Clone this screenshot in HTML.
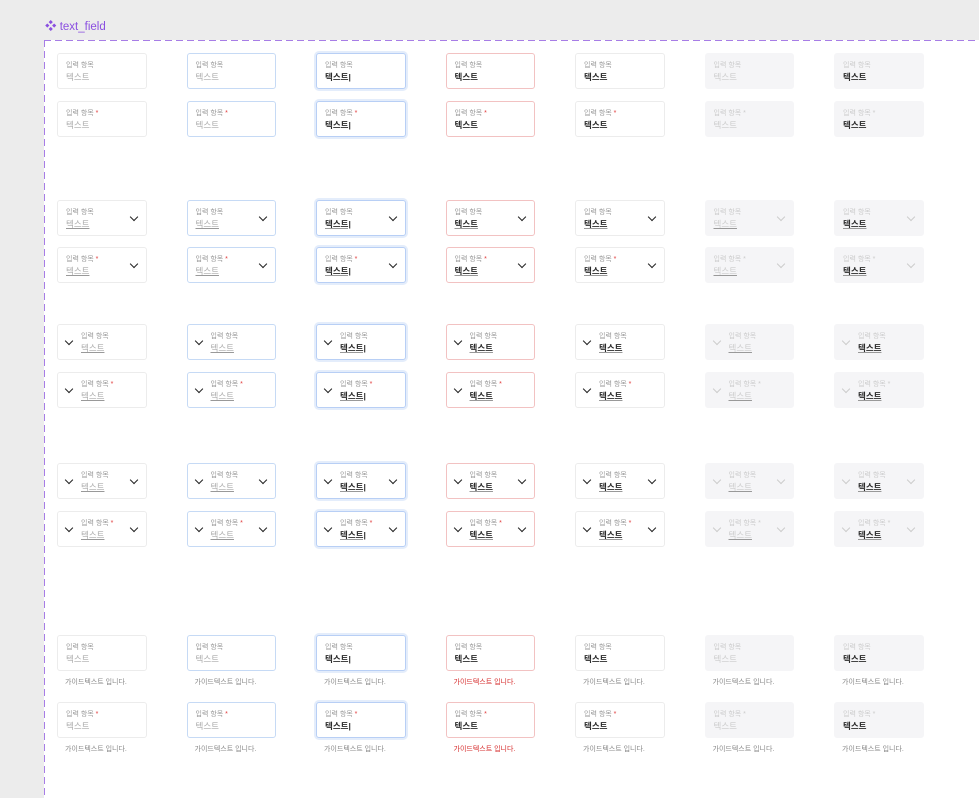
<!DOCTYPE html>
<html><head><meta charset="utf-8"><style>
*{box-sizing:border-box;margin:0;padding:0}
html,body{width:979px;height:798px;overflow:hidden}
body{background:#ececec;position:relative;font-family:"Liberation Sans","Noto Sans CJK KR",sans-serif}
.title{position:absolute;left:45px;top:18px;color:#8a4fe0;font-size:11.5px}
.frame{position:absolute;left:44px;top:40px;width:940px;height:770px;background:#fff}
.ft{position:absolute;left:44px;top:40px;width:940px;height:1px;background:repeating-linear-gradient(90deg,#a77de6 0 7px,transparent 7px 11px)}
.fl{position:absolute;left:44px;top:40px;width:1px;height:760px;background:repeating-linear-gradient(180deg,#a77de6 0 7px,transparent 7px 11px)}
.row{position:absolute;left:57px;display:flex;gap:40px}
.c{width:89.5px;position:relative}
.f{height:36px;border:1px solid #ececec;border-radius:3px;position:relative;background:#fff}
.l{position:absolute;left:8px;top:6px;font-size:7px;color:#999;white-space:nowrap}
.l b{color:#e03a3a;font-weight:normal}
.v{position:absolute;left:8px;top:17px;font-size:8.5px;color:#aaa;white-space:nowrap}
.u .v{text-decoration:underline;text-decoration-color:#999}
.lc .l,.lc .v{left:23px}
.cr{position:absolute;top:13px;width:6px;height:6px;border-right:1.3px solid #222;border-bottom:1.3px solid #222;transform:rotate(45deg)}
.cr.r{right:9px}.cr.L{left:8px}
.h{border-color:#c6daf5}
.fo{border:1.5px solid #b8cff5;box-shadow:0 0 0 2px #e4edfb}
.fo .v,.e .v,.fi .v{color:#2a2a2a;font-weight:bold}
.e{border-color:#f2c2c2}
.d,.df{background:#f5f5f7;border-color:#f5f5f7}
.d .l,.d .v,.df .l{color:#ccc}.d .l b,.df .l b{color:#ccc}
.df .v{color:#2a2a2a;font-weight:bold}
.d .cr,.df .cr{border-color:#ccc}
.g{font-size:7px;color:#888;margin:6px 0 0 8px;white-space:nowrap}
.g.er{color:#d62b2b}
</style></head><body>
<div class="title">❖ text_field</div>
<div class="frame"></div><div class="ft"></div><div class="fl"></div>

<!-- group 1 -->
<div class="row" style="top:53px">
<div class="c"><div class="f"><span class="l">입력 항목</span><span class="v">텍스트</span></div></div>
<div class="c"><div class="f h"><span class="l">입력 항목</span><span class="v">텍스트</span></div></div>
<div class="c"><div class="f fo"><span class="l">입력 항목</span><span class="v">텍스트|</span></div></div>
<div class="c"><div class="f e"><span class="l">입력 항목</span><span class="v">텍스트</span></div></div>
<div class="c"><div class="f fi"><span class="l">입력 항목</span><span class="v">텍스트</span></div></div>
<div class="c"><div class="f d"><span class="l">입력 항목</span><span class="v">텍스트</span></div></div>
<div class="c"><div class="f df"><span class="l">입력 항목</span><span class="v">텍스트</span></div></div>
</div>
<div class="row" style="top:101px">
<div class="c"><div class="f"><span class="l">입력 항목 <b>*</b></span><span class="v">텍스트</span></div></div>
<div class="c"><div class="f h"><span class="l">입력 항목 <b>*</b></span><span class="v">텍스트</span></div></div>
<div class="c"><div class="f fo"><span class="l">입력 항목 <b>*</b></span><span class="v">텍스트|</span></div></div>
<div class="c"><div class="f e"><span class="l">입력 항목 <b>*</b></span><span class="v">텍스트</span></div></div>
<div class="c"><div class="f fi"><span class="l">입력 항목 <b>*</b></span><span class="v">텍스트</span></div></div>
<div class="c"><div class="f d"><span class="l">입력 항목 <b>*</b></span><span class="v">텍스트</span></div></div>
<div class="c"><div class="f df"><span class="l">입력 항목 <b>*</b></span><span class="v">텍스트</span></div></div>
</div>

<!-- group 2: right chevron -->
<div class="row u" style="top:200px">
<div class="c"><div class="f"><span class="l">입력 항목</span><span class="v">텍스트</span><i class="cr r"></i></div></div>
<div class="c"><div class="f h"><span class="l">입력 항목</span><span class="v">텍스트</span><i class="cr r"></i></div></div>
<div class="c"><div class="f fo"><span class="l">입력 항목</span><span class="v">텍스트|</span><i class="cr r"></i></div></div>
<div class="c"><div class="f e"><span class="l">입력 항목</span><span class="v">텍스트</span><i class="cr r"></i></div></div>
<div class="c"><div class="f fi"><span class="l">입력 항목</span><span class="v">텍스트</span><i class="cr r"></i></div></div>
<div class="c"><div class="f d"><span class="l">입력 항목</span><span class="v">텍스트</span><i class="cr r"></i></div></div>
<div class="c"><div class="f df"><span class="l">입력 항목</span><span class="v">텍스트</span><i class="cr r"></i></div></div>
</div>
<div class="row u" style="top:247px">
<div class="c"><div class="f"><span class="l">입력 항목 <b>*</b></span><span class="v">텍스트</span><i class="cr r"></i></div></div>
<div class="c"><div class="f h"><span class="l">입력 항목 <b>*</b></span><span class="v">텍스트</span><i class="cr r"></i></div></div>
<div class="c"><div class="f fo"><span class="l">입력 항목 <b>*</b></span><span class="v">텍스트|</span><i class="cr r"></i></div></div>
<div class="c"><div class="f e"><span class="l">입력 항목 <b>*</b></span><span class="v">텍스트</span><i class="cr r"></i></div></div>
<div class="c"><div class="f fi"><span class="l">입력 항목 <b>*</b></span><span class="v">텍스트</span><i class="cr r"></i></div></div>
<div class="c"><div class="f d"><span class="l">입력 항목 <b>*</b></span><span class="v">텍스트</span><i class="cr r"></i></div></div>
<div class="c"><div class="f df"><span class="l">입력 항목 <b>*</b></span><span class="v">텍스트</span><i class="cr r"></i></div></div>
</div>

<!-- group 3: left chevron -->
<div class="row u lc" style="top:324px">
<div class="c"><div class="f"><i class="cr L"></i><span class="l">입력 항목</span><span class="v">텍스트</span></div></div>
<div class="c"><div class="f h"><i class="cr L"></i><span class="l">입력 항목</span><span class="v">텍스트</span></div></div>
<div class="c"><div class="f fo"><i class="cr L"></i><span class="l">입력 항목</span><span class="v">텍스트|</span></div></div>
<div class="c"><div class="f e"><i class="cr L"></i><span class="l">입력 항목</span><span class="v">텍스트</span></div></div>
<div class="c"><div class="f fi"><i class="cr L"></i><span class="l">입력 항목</span><span class="v">텍스트</span></div></div>
<div class="c"><div class="f d"><i class="cr L"></i><span class="l">입력 항목</span><span class="v">텍스트</span></div></div>
<div class="c"><div class="f df"><i class="cr L"></i><span class="l">입력 항목</span><span class="v">텍스트</span></div></div>
</div>
<div class="row u lc" style="top:372px">
<div class="c"><div class="f"><i class="cr L"></i><span class="l">입력 항목 <b>*</b></span><span class="v">텍스트</span></div></div>
<div class="c"><div class="f h"><i class="cr L"></i><span class="l">입력 항목 <b>*</b></span><span class="v">텍스트</span></div></div>
<div class="c"><div class="f fo"><i class="cr L"></i><span class="l">입력 항목 <b>*</b></span><span class="v">텍스트|</span></div></div>
<div class="c"><div class="f e"><i class="cr L"></i><span class="l">입력 항목 <b>*</b></span><span class="v">텍스트</span></div></div>
<div class="c"><div class="f fi"><i class="cr L"></i><span class="l">입력 항목 <b>*</b></span><span class="v">텍스트</span></div></div>
<div class="c"><div class="f d"><i class="cr L"></i><span class="l">입력 항목 <b>*</b></span><span class="v">텍스트</span></div></div>
<div class="c"><div class="f df"><i class="cr L"></i><span class="l">입력 항목 <b>*</b></span><span class="v">텍스트</span></div></div>
</div>

<!-- group 4: both chevrons -->
<div class="row u lc" style="top:463px">
<div class="c"><div class="f"><i class="cr L"></i><span class="l">입력 항목</span><span class="v">텍스트</span><i class="cr r"></i></div></div>
<div class="c"><div class="f h"><i class="cr L"></i><span class="l">입력 항목</span><span class="v">텍스트</span><i class="cr r"></i></div></div>
<div class="c"><div class="f fo"><i class="cr L"></i><span class="l">입력 항목</span><span class="v">텍스트|</span><i class="cr r"></i></div></div>
<div class="c"><div class="f e"><i class="cr L"></i><span class="l">입력 항목</span><span class="v">텍스트</span><i class="cr r"></i></div></div>
<div class="c"><div class="f fi"><i class="cr L"></i><span class="l">입력 항목</span><span class="v">텍스트</span><i class="cr r"></i></div></div>
<div class="c"><div class="f d"><i class="cr L"></i><span class="l">입력 항목</span><span class="v">텍스트</span><i class="cr r"></i></div></div>
<div class="c"><div class="f df"><i class="cr L"></i><span class="l">입력 항목</span><span class="v">텍스트</span><i class="cr r"></i></div></div>
</div>
<div class="row u lc" style="top:511px">
<div class="c"><div class="f"><i class="cr L"></i><span class="l">입력 항목 <b>*</b></span><span class="v">텍스트</span><i class="cr r"></i></div></div>
<div class="c"><div class="f h"><i class="cr L"></i><span class="l">입력 항목 <b>*</b></span><span class="v">텍스트</span><i class="cr r"></i></div></div>
<div class="c"><div class="f fo"><i class="cr L"></i><span class="l">입력 항목 <b>*</b></span><span class="v">텍스트|</span><i class="cr r"></i></div></div>
<div class="c"><div class="f e"><i class="cr L"></i><span class="l">입력 항목 <b>*</b></span><span class="v">텍스트</span><i class="cr r"></i></div></div>
<div class="c"><div class="f fi"><i class="cr L"></i><span class="l">입력 항목 <b>*</b></span><span class="v">텍스트</span><i class="cr r"></i></div></div>
<div class="c"><div class="f d"><i class="cr L"></i><span class="l">입력 항목 <b>*</b></span><span class="v">텍스트</span><i class="cr r"></i></div></div>
<div class="c"><div class="f df"><i class="cr L"></i><span class="l">입력 항목 <b>*</b></span><span class="v">텍스트</span><i class="cr r"></i></div></div>
</div>

<!-- group 5: with guide -->
<div class="row" style="top:635px">
<div class="c"><div class="f"><span class="l">입력 항목</span><span class="v">텍스트</span></div><div class="g">가이드텍스트 입니다.</div></div>
<div class="c"><div class="f h"><span class="l">입력 항목</span><span class="v">텍스트</span></div><div class="g">가이드텍스트 입니다.</div></div>
<div class="c"><div class="f fo"><span class="l">입력 항목</span><span class="v">텍스트|</span></div><div class="g">가이드텍스트 입니다.</div></div>
<div class="c"><div class="f e"><span class="l">입력 항목</span><span class="v">텍스트</span></div><div class="g er">가이드텍스트 입니다.</div></div>
<div class="c"><div class="f fi"><span class="l">입력 항목</span><span class="v">텍스트</span></div><div class="g">가이드텍스트 입니다.</div></div>
<div class="c"><div class="f d"><span class="l">입력 항목</span><span class="v">텍스트</span></div><div class="g">가이드텍스트 입니다.</div></div>
<div class="c"><div class="f df"><span class="l">입력 항목</span><span class="v">텍스트</span></div><div class="g">가이드텍스트 입니다.</div></div>
</div>
<div class="row" style="top:702px">
<div class="c"><div class="f"><span class="l">입력 항목 <b>*</b></span><span class="v">텍스트</span></div><div class="g">가이드텍스트 입니다.</div></div>
<div class="c"><div class="f h"><span class="l">입력 항목 <b>*</b></span><span class="v">텍스트</span></div><div class="g">가이드텍스트 입니다.</div></div>
<div class="c"><div class="f fo"><span class="l">입력 항목 <b>*</b></span><span class="v">텍스트|</span></div><div class="g">가이드텍스트 입니다.</div></div>
<div class="c"><div class="f e"><span class="l">입력 항목 <b>*</b></span><span class="v">텍스트</span></div><div class="g er">가이드텍스트 입니다.</div></div>
<div class="c"><div class="f fi"><span class="l">입력 항목 <b>*</b></span><span class="v">텍스트</span></div><div class="g">가이드텍스트 입니다.</div></div>
<div class="c"><div class="f d"><span class="l">입력 항목 <b>*</b></span><span class="v">텍스트</span></div><div class="g">가이드텍스트 입니다.</div></div>
<div class="c"><div class="f df"><span class="l">입력 항목 <b>*</b></span><span class="v">텍스트</span></div><div class="g">가이드텍스트 입니다.</div></div>
</div>
</body></html>
